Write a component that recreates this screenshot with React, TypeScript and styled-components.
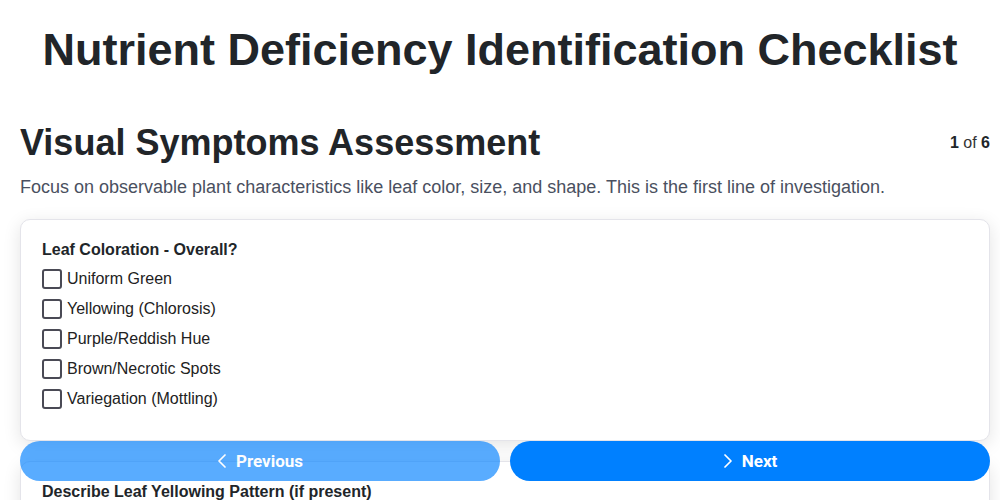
import React from "react";
import styled, { createGlobalStyle } from "styled-components";

const GlobalStyle = createGlobalStyle`
  html, body {
    margin: 0;
    padding: 0;
    background: #ffffff;
  }
  body {
    font-family: "Liberation Sans", Arial, sans-serif;
    color: #212529;
  }
  * { box-sizing: border-box; }
`;

const Page = styled.div`
  padding: 0 10px 120px 20px;
`;

const Title = styled.h1`
  margin: 24px -10px 0 -20px;
  font-size: 45px;
  line-height: 52px;
  font-weight: 700;
  text-align: center;
  color: #212529;
`;

const StepHeader = styled.div`
  display: flex;
  align-items: center;
  justify-content: space-between;
  margin-top: 46px;
`;

const StepTitle = styled.h2`
  margin: 0;
  font-size: 36px;
  line-height: 42px;
  font-weight: 700;
  color: #212529;
`;

const Counter = styled.div`
  font-size: 16px;
  color: #333;
  b { font-weight: 700; color: #212529; }
`;

const Description = styled.p`
  margin: 11px 0 0;
  font-size: 18px;
  line-height: 24px;
  color: #4a5060;
`;

const Cards = styled.div`
  display: flex;
  flex-direction: column;
  gap: 20px;
  margin-top: 20px;
`;

const Card = styled.div`
  background: #fff;
  border: 1px solid #e4e4ea;
  border-radius: 10px;
  box-shadow: 0 4px 18px rgba(0, 0, 0, 0.11);
  padding: 21px 20px 21px 21px;
`;

const QuestionLabel = styled.div`
  font-size: 16px;
  line-height: 18px;
  font-weight: 700;
  color: #212529;
  margin-bottom: 10px;
`;

const Option = styled.label`
  display: flex;
  align-items: center;
  gap: 5px;
  height: 20px;
  margin-bottom: 10px;
  font-size: 16px;
  color: #222;
  cursor: pointer;
`;

const Box = styled.input`
  appearance: none;
  -webkit-appearance: none;
  margin: 0;
  width: 20px;
  height: 20px;
  border: 2px solid #4a4a55;
  border-radius: 3px;
  background: #fff;
  flex: none;
`;

const NavBar = styled.div`
  position: fixed;
  left: 20px;
  right: 10px;
  bottom: 19px;
  display: grid;
  grid-template-columns: 1fr 1fr;
  gap: 10px;
`;

const NavButton = styled.button<{ $disabled?: boolean }>`
  height: 40px;
  border: none;
  border-radius: 20px;
  background: #0080ff;
  color: #fff;
  font-family: Roboto, "Liberation Sans", sans-serif;
  font-size: 17px;
  font-weight: 700;
  display: flex;
  align-items: center;
  justify-content: center;
  gap: 9px;
  opacity: ${(p) => (p.$disabled ? 0.65 : 1)};
  cursor: ${(p) => (p.$disabled ? "default" : "pointer")};
`;

const Chevron = ({ dir }: { dir: "left" | "right" }) => (
  <svg width="10" height="14" viewBox="0 0 10 14" fill="none">
    <path
      d={dir === "left" ? "M8 1 L2 7 L8 13" : "M2 1 L8 7 L2 13"}
      stroke="#fff"
      strokeWidth="1.7"
      strokeLinecap="round"
      strokeLinejoin="round"
    />
  </svg>
);

const questions = [
  {
    label: "Leaf Coloration - Overall?",
    options: [
      "Uniform Green",
      "Yellowing (Chlorosis)",
      "Purple/Reddish Hue",
      "Brown/Necrotic Spots",
      "Variegation (Mottling)",
    ],
  },
  {
    label: "Describe Leaf Yellowing Pattern (if present)",
    options: [
      "Older Leaves First",
      "Younger Leaves First",
      "Interveinal Yellowing",
      "Uniform Yellowing",
    ],
  },
  {
    label: "Leaf Size and Shape?",
    options: ["Normal", "Stunted/Small", "Distorted/Curled", "Cupped"],
  },
];

export default function App() {
  return (
    <>
      <GlobalStyle />
      <Page>
        <Title>Nutrient Deficiency Identification Checklist</Title>
        <StepHeader>
          <StepTitle>Visual Symptoms Assessment</StepTitle>
          <Counter>
            <b>1</b> of <b>6</b>
          </Counter>
        </StepHeader>
        <Description>
          Focus on observable plant characteristics like leaf color, size, and
          shape. This is the first line of investigation.
        </Description>
        <Cards>
          {questions.map((q) => (
            <Card key={q.label}>
              <QuestionLabel>{q.label}</QuestionLabel>
              {q.options.map((o) => (
                <Option key={o}>
                  <Box type="checkbox" />
                  {o}
                </Option>
              ))}
            </Card>
          ))}
        </Cards>
      </Page>
      <NavBar>
        <NavButton $disabled>
          <Chevron dir="left" />
          Previous
        </NavButton>
        <NavButton>
          <Chevron dir="right" />
          Next
        </NavButton>
      </NavBar>
    </>
  );
}
